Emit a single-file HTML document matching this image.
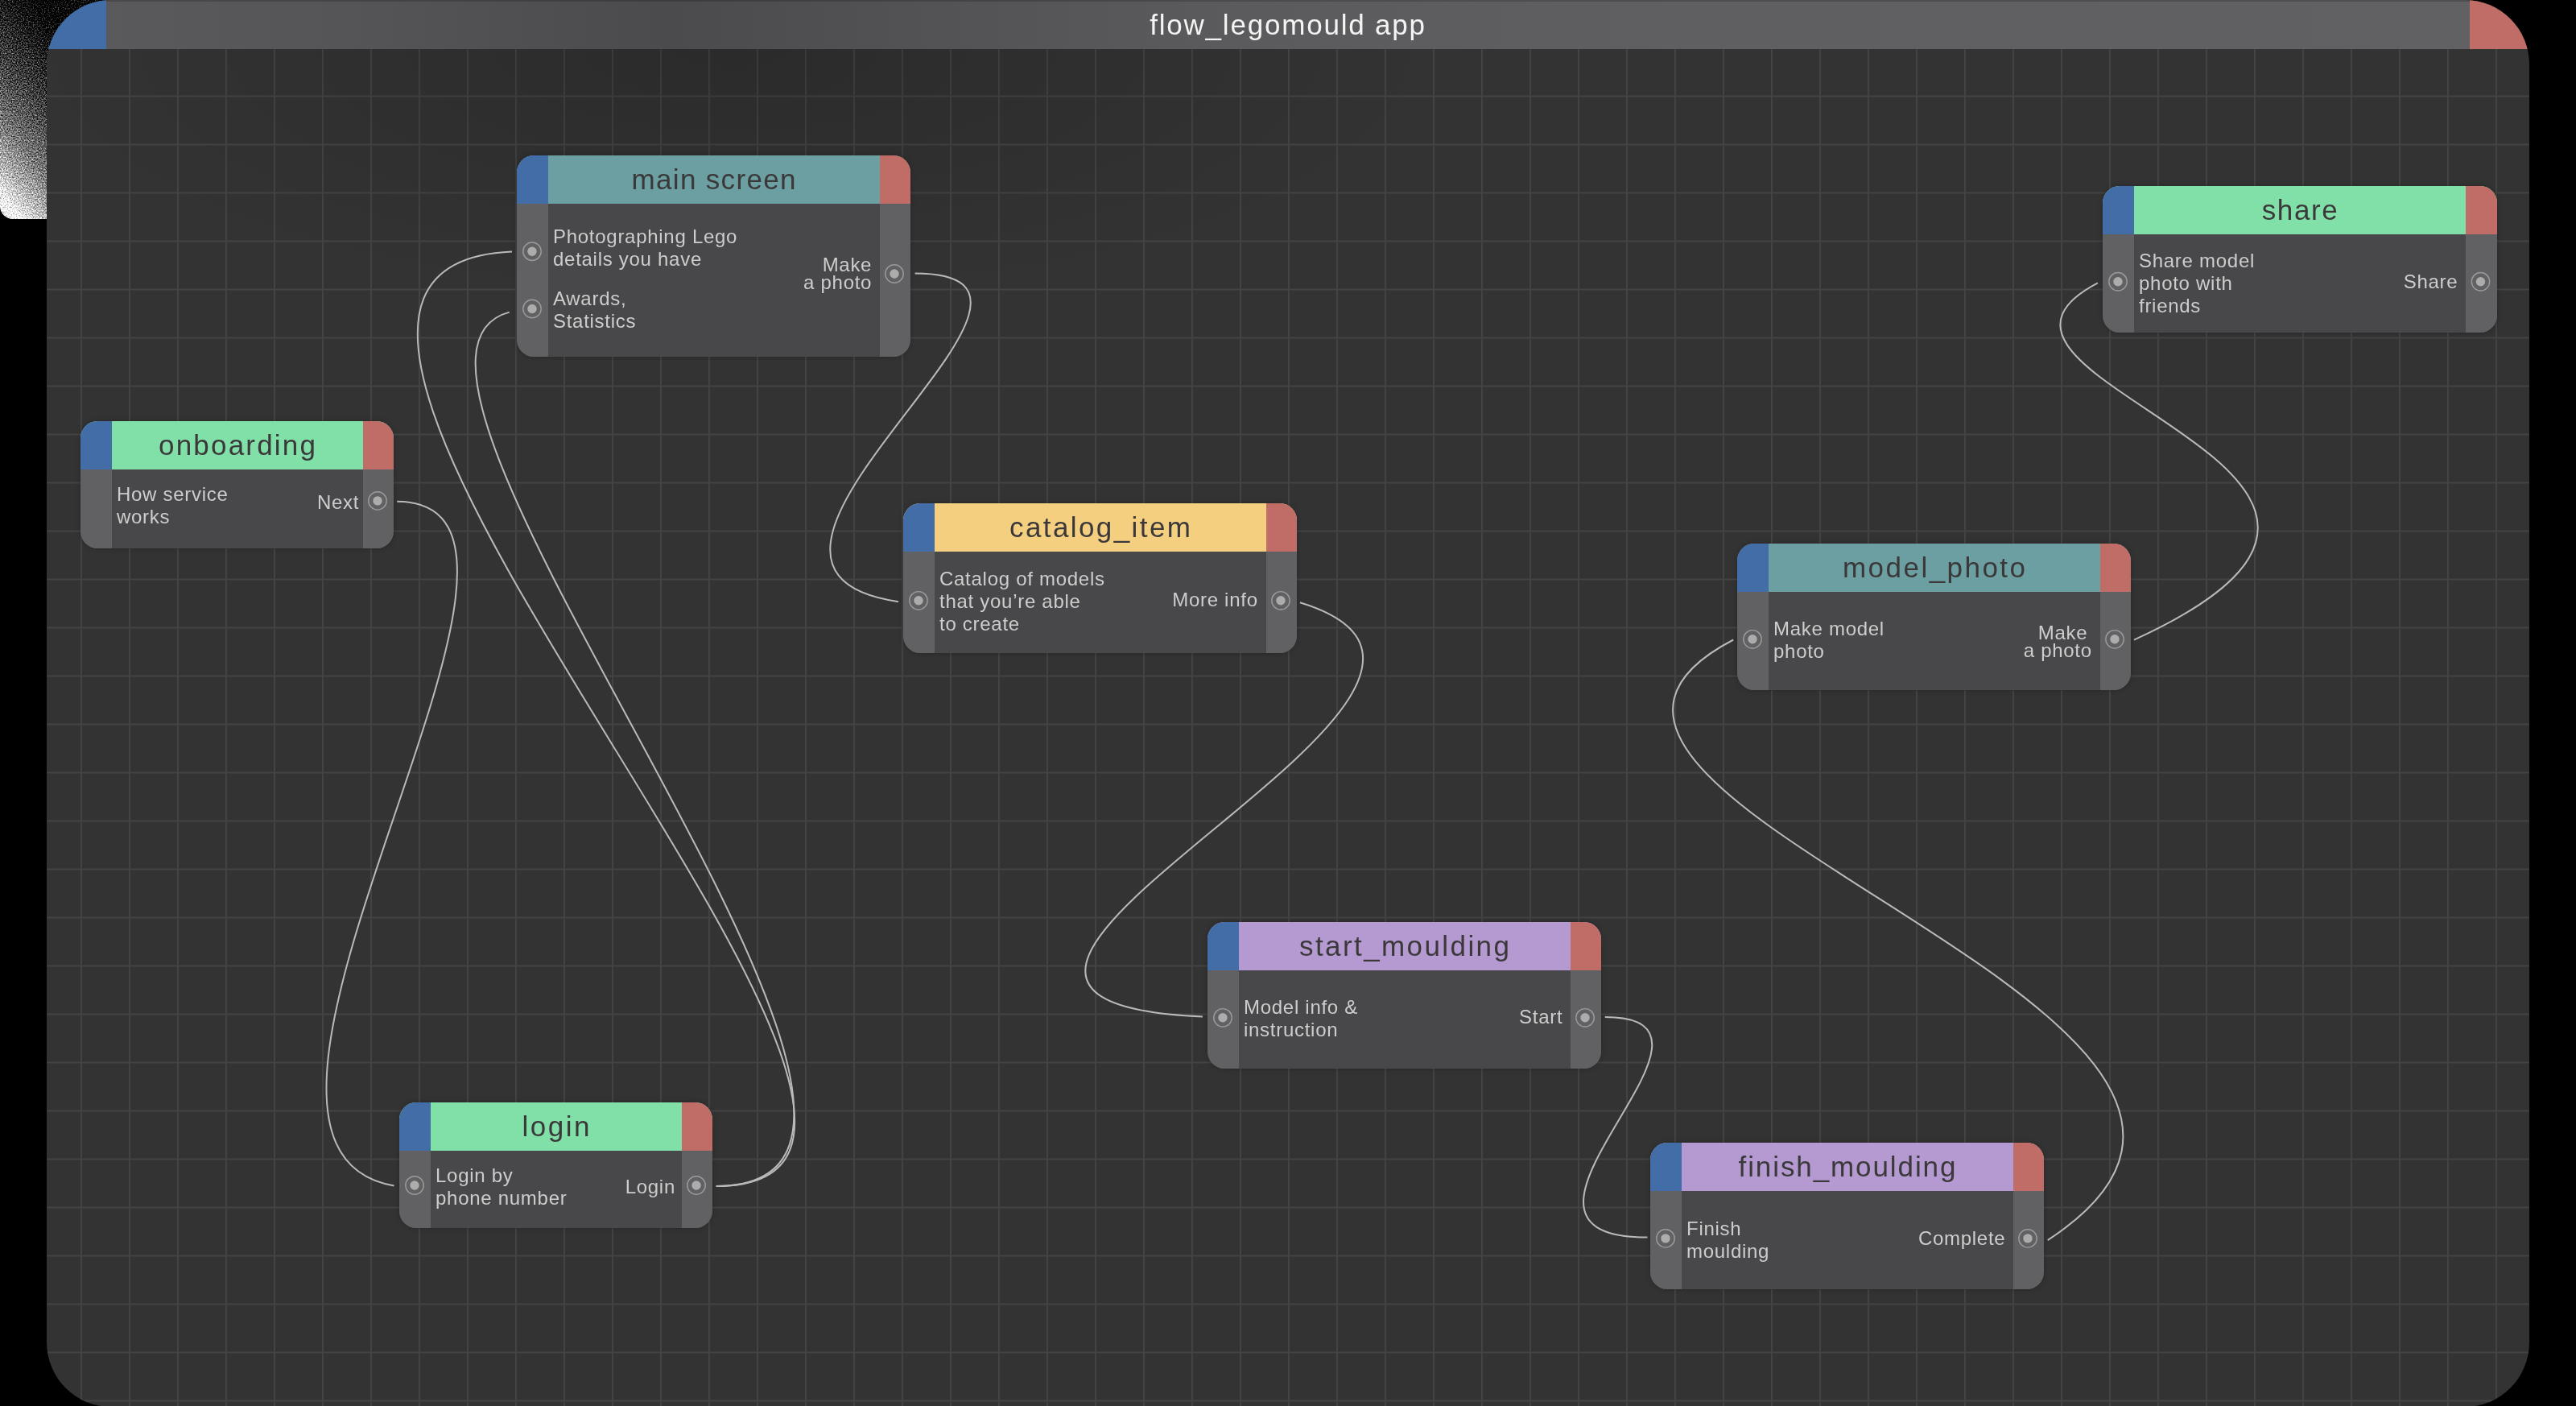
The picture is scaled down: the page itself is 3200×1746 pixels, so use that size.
<!DOCTYPE html>
<html><head><meta charset="utf-8"><style>
html,body{margin:0;padding:0;}
.node,.tbar{will-change:transform;}
body{width:3200px;height:1746px;background:#000;position:relative;overflow:hidden;font-family:"Liberation Sans",sans-serif;}
.noise{position:absolute;left:0;top:0;width:150px;height:272px;border-bottom-left-radius:16px;overflow:hidden;}
.card{position:absolute;left:58px;top:0;width:3084px;height:1747px;border-radius:80px;overflow:hidden;background:#333;}
.grid{position:absolute;left:0;top:0;right:0;bottom:0;
 background-image:linear-gradient(90deg,#434343 0,#434343 2px,transparent 2px),linear-gradient(180deg,#3b3b3b 0,#3b3b3b 1px,#434343 1px,#434343 2px,#3b3b3b 2px,#3b3b3b 3px,transparent 3px);
 background-size:60px 60px,60px 60px;background-position:42px 0,0 58px;}
.shade{position:absolute;left:0;top:0;right:0;bottom:0;background:radial-gradient(ellipse 900px 320px at 850px 60px,rgba(0,0,0,0.16),rgba(0,0,0,0) 100%);}
.tbar{position:absolute;left:0;top:0;width:3084px;height:61px;background:linear-gradient(90deg,#5b5b5d 0%,#555557 12%,#4b4b4d 25%,#535355 36%,#5b5b5d 48%,#5f5f61 65%,#616163 100%);
 color:#f4f4f4;font-size:35px;line-height:61px;text-align:center;letter-spacing:1.8px;}
.tbar .b{position:absolute;left:0;top:0;width:74px;height:61px;background:#426da6;}
.tbar .r{position:absolute;right:0;top:0;width:74px;height:61px;background:#c06c67;}
.tbar .topline{position:absolute;left:0;right:0;top:0;height:2px;background:rgba(0,0,0,0.18);}
svg.wires{position:absolute;left:0;top:0;}
svg.wires path{fill:none;stroke:#bababa;stroke-width:2px;}
.node{position:absolute;border-radius:21px;overflow:hidden;background:#48484a;box-shadow:0 0 6px rgba(0,0,0,0.25);}
.node .hd{position:absolute;left:0;top:0;right:0;height:60px;text-align:center;color:#3b383a;font-size:35px;line-height:60px;letter-spacing:0.8px;white-space:nowrap;}
.node .bl{position:absolute;left:0;top:0;width:38.5px;height:60px;background:#426da6;}
.node .rd{position:absolute;right:0;top:0;width:38.5px;height:60px;background:#c06c67;}
.node .sl{position:absolute;left:0;top:60px;bottom:0;width:38.5px;background:#616163;}
.node .sr{position:absolute;right:0;top:60px;bottom:0;width:38.5px;background:#616163;}
.node .lt{position:absolute;left:45px;color:#cdcdcd;font-size:24px;line-height:28px;white-space:nowrap;letter-spacing:0.72px;}
.node .rt{position:absolute;color:#cdcdcd;font-size:24px;text-align:right;white-space:nowrap;letter-spacing:0.72px;}
.sk{position:absolute;width:20.8px;height:20.8px;border:1.6px solid #a9a9a9;border-radius:50%;}
.sk::after{content:"";position:absolute;left:4.7px;top:4.7px;width:11.4px;height:11.4px;border-radius:50%;background:#b0b0b0;}
</style></head><body>
<div class="noise"><svg width="150" height="272" viewBox="0 0 150 272">
<defs><linearGradient id="ng" x1="0.75" y1="0" x2="0.1" y2="1"><stop offset="0.037" stop-color="rgb(0,0,0)"/><stop offset="0.074" stop-color="rgb(0,0,0)"/><stop offset="0.221" stop-color="rgb(0,0,0)"/><stop offset="0.368" stop-color="rgb(39,39,39)"/><stop offset="0.551" stop-color="rgb(79,79,79)"/><stop offset="0.735" stop-color="rgb(129,129,129)"/><stop offset="0.882" stop-color="rgb(198,198,198)"/><stop offset="0.963" stop-color="rgb(255,255,255)"/></linearGradient>
<filter id="nf" x="0" y="0" width="100%" height="100%" color-interpolation-filters="sRGB">
<feTurbulence type="fractalNoise" baseFrequency="0.65" numOctaves="2" seed="7" result="t"/>
<feColorMatrix in="t" type="matrix" values="1 0 0 0 0 1 0 0 0 0 1 0 0 0 0 0 0 0 0 1" result="n"/>
<feComposite in="SourceGraphic" in2="n" operator="arithmetic" k1="0" k2="1.0" k3="1.3" k4="-0.68" result="s"/><feComponentTransfer in="s"><feFuncA type="linear" slope="0" intercept="1"/></feComponentTransfer>
</filter></defs>
<rect width="150" height="272" fill="url(#ng)" filter="url(#nf)"/></svg></div>
<div class="card"><div class="grid"></div><div class="shade"></div>
<div class="tbar"><div class="topline"></div><div class="b"></div><div class="r"></div>flow_legomould app</div>
</div>
<svg class="wires" width="3200" height="1746" viewBox="0 0 3200 1746"><path d="M493.2 622.8C760.2 622.8 203.8 1423.4 489.5 1472.4"/><path d="M889.5 1473.0C1320.3 1473.0 158.8 331.5 636.0 312.5"/><path d="M889.8 1472.9C1268.9 1472.9 393.6 452.2 632.7 387.6"/><path d="M1136.6 339.4C1394.8 339.4 825.9 705.0 1116.0 747.2"/><path d="M1614.9 748.3C1965.4 854.3 995.3 1241.8 1493.9 1262.4"/><path d="M1993.8 1263.0C2189.1 1263.0 1812.6 1536.6 2046.5 1536.6"/><path d="M2543.7 1540.1C2971.4 1260.6 1774.6 992.2 2153.2 794.5"/><path d="M2650.9 794.6C3109.8 585.3 2373.5 473.2 2605.9 351.3"/></svg>
<div class="node" style="left:642px;top:193px;width:489px;height:250px"><div class="hd" style="background:#6b9fa1;letter-spacing:1.34px;text-indent:1.34px"><span>main screen</span></div><div class="bl"></div><div class="rd"></div><div class="sl"></div><div class="sr"></div><div class="lt" style="top:86.5px">Photographing Lego<br>details you have</div><div class="lt" style="top:164.3px">Awards,<br>Statistics</div><div class="rt" style="top:125.1px;right:47.8px;line-height:22px">Make<br>a photo</div></div><div class="node" style="left:100px;top:523px;width:389px;height:158px"><div class="hd" style="background:#80e0a8;letter-spacing:2.19px;text-indent:2.19px"><span>onboarding</span></div><div class="bl"></div><div class="rd"></div><div class="sl"></div><div class="sr"></div><div class="lt" style="top:76.9px">How service<br>works</div><div class="rt" style="top:86.8px;right:42.8px;line-height:28px">Next</div></div><div class="node" style="left:1122px;top:625px;width:489px;height:186px"><div class="hd" style="background:#f5cf80;letter-spacing:2.4px;text-indent:2.4px"><span>catalog_item</span></div><div class="bl"></div><div class="rd"></div><div class="sl"></div><div class="sr"></div><div class="lt" style="top:80.2px">Catalog of models<br>that you’re able<br>to create</div><div class="rt" style="top:106.4px;right:48.3px;line-height:28px">More info</div></div><div class="node" style="left:496px;top:1369px;width:389px;height:156px"><div class="hd" style="background:#80e0a8;letter-spacing:2.5px;text-indent:2.5px"><span>login</span></div><div class="bl"></div><div class="rd"></div><div class="sl"></div><div class="sr"></div><div class="lt" style="top:76.5px">Login by<br>phone number</div><div class="rt" style="top:90.5px;right:46.0px;line-height:28px">Login</div></div><div class="node" style="left:1500px;top:1145px;width:489px;height:182px"><div class="hd" style="background:#b49ad1;letter-spacing:2.41px;text-indent:2.41px"><span>start_moulding</span></div><div class="bl"></div><div class="rd"></div><div class="sl"></div><div class="sr"></div><div class="lt" style="top:92.3px">Model info &amp;<br>instruction</div><div class="rt" style="top:104.4px;right:47.6px;line-height:28px">Start</div></div><div class="node" style="left:2050px;top:1419px;width:489px;height:182px"><div class="hd" style="background:#b49ad1;letter-spacing:1.91px;text-indent:1.91px"><span>finish_moulding</span></div><div class="bl"></div><div class="rd"></div><div class="sl"></div><div class="sr"></div><div class="lt" style="top:92.7px">Finish<br>moulding</div><div class="rt" style="top:104.5px;right:47.6px;line-height:28px">Complete</div></div><div class="node" style="left:2158px;top:675px;width:489px;height:182px"><div class="hd" style="background:#6b9fa1;letter-spacing:2.46px;text-indent:2.46px"><span>model_photo</span></div><div class="bl"></div><div class="rd"></div><div class="sl"></div><div class="sr"></div><div class="lt" style="top:92.3px">Make model<br>photo</div><div class="rt" style="top:99.7px;right:48.2px;line-height:22px"><span style="padding-right:5.4px">Make</span><br>a photo</div></div><div class="node" style="left:2612px;top:231px;width:489.5px;height:182px"><div class="hd" style="background:#80e0a8;letter-spacing:1.6px;text-indent:1.6px"><span>share</span></div><div class="bl"></div><div class="rd"></div><div class="sl"></div><div class="sr"></div><div class="lt" style="top:78.7px">Share model<br>photo with<br>friends</div><div class="rt" style="top:105.3px;right:48.1px;line-height:28px">Share</div></div>
<svg class="wires" width="3200" height="1746" viewBox="0 0 3200 1746"><circle cx="661.0" cy="312.2" r="11.2" fill="none" stroke="#9a9a9a" stroke-width="1.45"/><circle cx="661.0" cy="312.2" r="5.7" fill="#acacac"/><circle cx="661.0" cy="383.5" r="11.2" fill="none" stroke="#9a9a9a" stroke-width="1.45"/><circle cx="661.0" cy="383.5" r="5.7" fill="#acacac"/><circle cx="1111.0" cy="340.0" r="11.2" fill="none" stroke="#9a9a9a" stroke-width="1.45"/><circle cx="1111.0" cy="340.0" r="5.7" fill="#acacac"/><circle cx="469.0" cy="621.9" r="11.2" fill="none" stroke="#9a9a9a" stroke-width="1.45"/><circle cx="469.0" cy="621.9" r="5.7" fill="#acacac"/><circle cx="1141.0" cy="745.8" r="11.2" fill="none" stroke="#9a9a9a" stroke-width="1.45"/><circle cx="1141.0" cy="745.8" r="5.7" fill="#acacac"/><circle cx="1591.0" cy="745.8" r="11.2" fill="none" stroke="#9a9a9a" stroke-width="1.45"/><circle cx="1591.0" cy="745.8" r="5.7" fill="#acacac"/><circle cx="515.0" cy="1472.0" r="11.2" fill="none" stroke="#9a9a9a" stroke-width="1.45"/><circle cx="515.0" cy="1472.0" r="5.7" fill="#acacac"/><circle cx="865.0" cy="1472.0" r="11.2" fill="none" stroke="#9a9a9a" stroke-width="1.45"/><circle cx="865.0" cy="1472.0" r="5.7" fill="#acacac"/><circle cx="1519.0" cy="1263.8" r="11.2" fill="none" stroke="#9a9a9a" stroke-width="1.45"/><circle cx="1519.0" cy="1263.8" r="5.7" fill="#acacac"/><circle cx="1969.0" cy="1263.8" r="11.2" fill="none" stroke="#9a9a9a" stroke-width="1.45"/><circle cx="1969.0" cy="1263.8" r="5.7" fill="#acacac"/><circle cx="2069.0" cy="1537.9" r="11.2" fill="none" stroke="#9a9a9a" stroke-width="1.45"/><circle cx="2069.0" cy="1537.9" r="5.7" fill="#acacac"/><circle cx="2519.0" cy="1537.9" r="11.2" fill="none" stroke="#9a9a9a" stroke-width="1.45"/><circle cx="2519.0" cy="1537.9" r="5.7" fill="#acacac"/><circle cx="2177.0" cy="793.8" r="11.2" fill="none" stroke="#9a9a9a" stroke-width="1.45"/><circle cx="2177.0" cy="793.8" r="5.7" fill="#acacac"/><circle cx="2627.0" cy="793.8" r="11.2" fill="none" stroke="#9a9a9a" stroke-width="1.45"/><circle cx="2627.0" cy="793.8" r="5.7" fill="#acacac"/><circle cx="2631.0" cy="349.8" r="11.2" fill="none" stroke="#9a9a9a" stroke-width="1.45"/><circle cx="2631.0" cy="349.8" r="5.7" fill="#acacac"/><circle cx="3081.5" cy="349.8" r="11.2" fill="none" stroke="#9a9a9a" stroke-width="1.45"/><circle cx="3081.5" cy="349.8" r="5.7" fill="#acacac"/></svg>
</body></html>
